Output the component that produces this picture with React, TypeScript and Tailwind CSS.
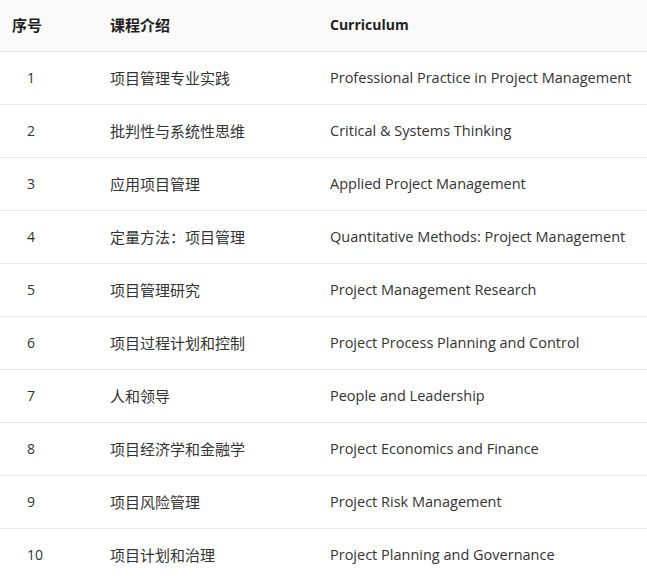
const rows = [
  ['1', '项目管理专业实践', 'Professional Practice in Project Management'],
  ['2', '批判性与系统性思维', 'Critical & Systems Thinking'],
  ['3', '应用项目管理', 'Applied Project Management'],
  ['4', '定量方法：项目管理', 'Quantitative Methods: Project Management'],
  ['5', '项目管理研究', 'Project Management Research'],
  ['6', '项目过程计划和控制', 'Project Process Planning and Control'],
  ['7', '人和领导', 'People and Leadership'],
  ['8', '项目经济学和金融学', 'Project Economics and Finance'],
  ['9', '项目风险管理', 'Project Risk Management'],
  ['10', '项目计划和治理', 'Project Planning and Governance'],
];

const App = () => {
  return (
    <div
      className="w-[647px] h-[577px] overflow-hidden bg-white text-[14px]"
      style={{ fontFamily: '"Open Sans", "Noto Sans CJK SC", sans-serif' }}
    >
      <div className="grid grid-cols-[110px_220px_1fr] h-[52px] items-center bg-[#fafafa] border-b border-[#e8e8e8] font-bold text-[#1f1f1f] leading-5 pb-px">
        <div className="pl-3 text-[15px]">序号</div>
        <div className="text-[15px]">课程介绍</div>
        <div>Curriculum</div>
      </div>
      {rows.map(([no, cn, en]) => (
        <div
          key={no}
          className="grid grid-cols-[110px_220px_1fr] h-[53px] items-center border-b border-[#e8e8e8] text-[#333333] leading-5 pb-px"
        >
          <div className="pl-[27px]">{no}</div>
          <div className="text-[15px]">{cn}</div>
          <div className="whitespace-nowrap text-[14.5px]">{en}</div>
        </div>
      ))}
    </div>
  );
};

export default App;
